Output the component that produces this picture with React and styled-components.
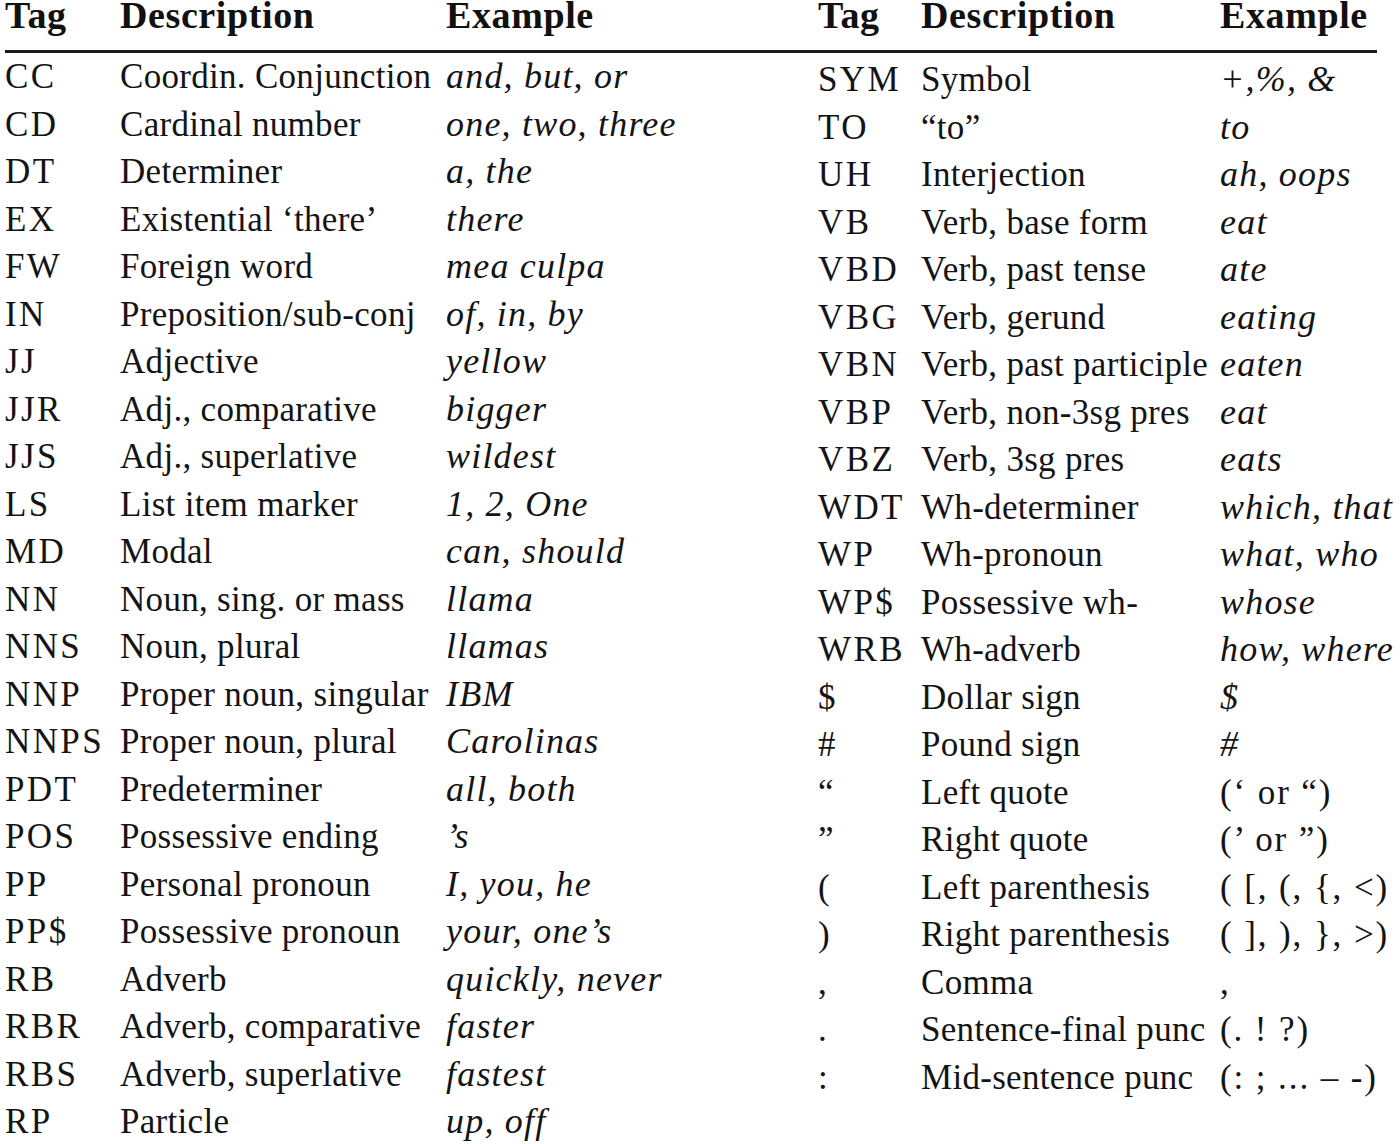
import styled, { createGlobalStyle } from "styled-components";

const left = [
  ["CC", "Coordin. Conjunction", "and, but, or"],
  ["CD", "Cardinal number", "one, two, three"],
  ["DT", "Determiner", "a, the"],
  ["EX", "Existential ‘there’", "there"],
  ["FW", "Foreign word", "mea culpa"],
  ["IN", "Preposition/sub-conj", "of, in, by"],
  ["JJ", "Adjective", "yellow"],
  ["JJR", "Adj., comparative", "bigger"],
  ["JJS", "Adj., superlative", "wildest"],
  ["LS", "List item marker", "1, 2, One"],
  ["MD", "Modal", "can, should"],
  ["NN", "Noun, sing. or mass", "llama"],
  ["NNS", "Noun, plural", "llamas"],
  ["NNP", "Proper noun, singular", "IBM"],
  ["NNPS", "Proper noun, plural", "Carolinas"],
  ["PDT", "Predeterminer", "all, both"],
  ["POS", "Possessive ending", "’s"],
  ["PP", "Personal pronoun", "I, you, he"],
  ["PP$", "Possessive pronoun", "your, one’s"],
  ["RB", "Adverb", "quickly, never"],
  ["RBR", "Adverb, comparative", "faster"],
  ["RBS", "Adverb, superlative", "fastest"],
  ["RP", "Particle", "up, off"]
];

// 4th field: example is set upright (punctuation rows)
const right = [
  ["SYM", "Symbol", "+,%, &"],
  ["TO", "“to”", "to"],
  ["UH", "Interjection", "ah, oops"],
  ["VB", "Verb, base form", "eat"],
  ["VBD", "Verb, past tense", "ate"],
  ["VBG", "Verb, gerund", "eating"],
  ["VBN", "Verb, past participle", "eaten"],
  ["VBP", "Verb, non-3sg pres", "eat"],
  ["VBZ", "Verb, 3sg pres", "eats"],
  ["WDT", "Wh-determiner", "which, that"],
  ["WP", "Wh-pronoun", "what, who"],
  ["WP$", "Possessive wh-", "whose"],
  ["WRB", "Wh-adverb", "how, where"],
  ["$", "Dollar sign", "$"],
  ["#", "Pound sign", "#"],
  ["“", "Left quote", "(‘ or “)", true],
  ["”", "Right quote", "(’ or ”)", true],
  ["(", "Left parenthesis", "( [, (, {, <)", true],
  [")", "Right parenthesis", "( ], ), }, >)", true],
  [",", "Comma", ",", true],
  [".", "Sentence-final punc", "(. ! ?)", true],
  [":", "Mid-sentence punc", "(: ; ... – -)", true]
];

const GlobalStyle = createGlobalStyle`
  html, body {
    margin: 0;
    padding: 0;
    background: #fff;
  }
  body {
    font-family: "Liberation Serif", "Times New Roman", serif;
    color: #141414;
  }
`;

const Page = styled.div`
  display: flex;
  width: 1400px;
  padding-left: 5px;
  box-sizing: border-box;
`;

const Table = styled.div`
  width: ${(p) => p.width}px;
  padding-left: ${(p) => p.indent}px;
  box-sizing: border-box;
  display: grid;
  grid-template-columns: ${(p) => p.cols};
  align-content: start;
`;

const Head = styled.div`
  font-weight: 700;
  font-size: 38px;
  line-height: 31px;
  letter-spacing: 0.6px;
  height: 50px;
  white-space: nowrap;
  color: #111;
`;

const Rule = styled.div`
  grid-column: 1 / -1;
  margin-left: ${(p) => -p.indent}px;
  height: 3px;
  background: #1a1a1a;
  margin-bottom: ${(p) => p.drop}px;
`;

const Cell = styled.div`
  font-size: 35px;
  line-height: 47.5px;
  height: 47.5px;
  white-space: nowrap;
`;

const TagCell = styled(Cell)`
  letter-spacing: 2.4px;
`;

const DescCell = styled(Cell)`
  letter-spacing: 0.3px;
`;

const ExampleCell = styled(Cell)`
  font-style: ${(p) => (p.upright ? "normal" : "italic")};
  font-size: ${(p) => (p.upright ? 35 : 36)}px;
  letter-spacing: ${(p) => (p.upright ? 1.9 : 1.2)}px;
`;

function Row({ tag, desc, ex, upright }) {
  return (
    <>
      <TagCell>{tag}</TagCell>
      <DescCell>{desc}</DescCell>
      <ExampleCell upright={upright}>{ex}</ExampleCell>
    </>
  );
}

function TagTable({ rows, width, indent, cols, drop }) {
  return (
    <Table width={width} indent={indent} cols={cols}>
      <Head>Tag</Head>
      <Head>Description</Head>
      <Head>Example</Head>
      <Rule indent={indent} drop={drop} />
      {rows.map(([tag, desc, ex, upright]) => (
        <Row key={tag} tag={tag} desc={desc} ex={ex} upright={upright} />
      ))}
    </Table>
  );
}

export default function App() {
  return (
    <>
      <GlobalStyle />
      <Page>
        <TagTable rows={left} width={695} indent={0} cols="115px 326px minmax(0, 1fr)" drop={0} />
        <TagTable rows={right} width={677} indent={118} cols="103px 299px minmax(0, 1fr)" drop={3} />
      </Page>
    </>
  );
}
